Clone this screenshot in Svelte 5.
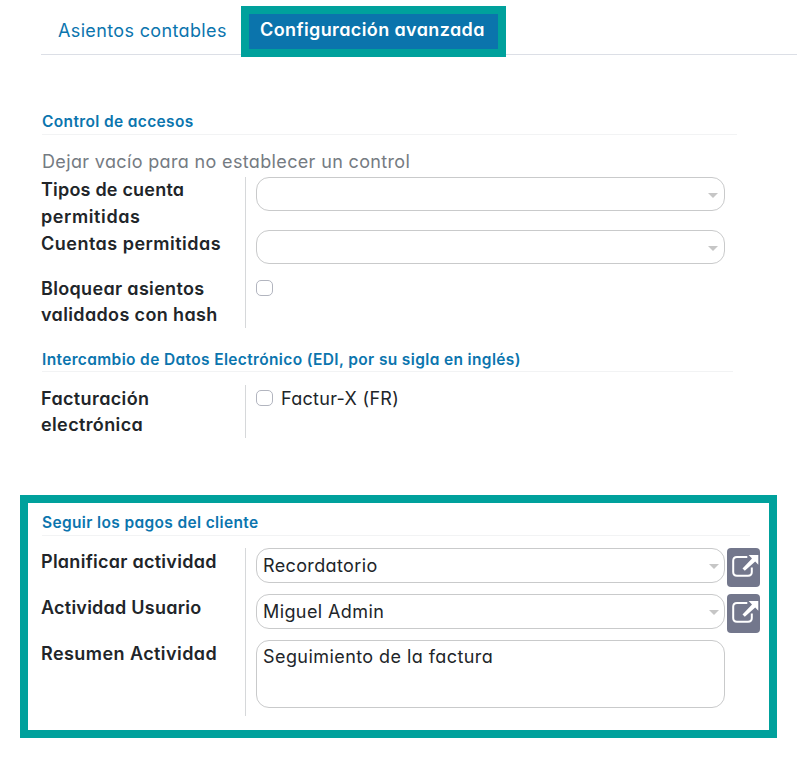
<script>
  const accessRows = [
    { kind: 'select', height: 53, loose: true, lines: [['Tipos de cuenta', 0.2], ['permitidas', 0.6]] },
    { kind: 'select', height: 45, lines: [['Cuentas permitidas', 0.49]] },
    { kind: 'check', height: 53, lines: [['Bloquear asientos', 0.33], ['validados con hash', 0.36]] }
  ];
  const ediRows = [
    {
      kind: 'check',
      height: 53,
      lines: [['Facturación', 0.38], ['electrónica', 0.38]],
      text: 'Factur-X (FR)',
      spacing: 0.3
    }
  ];
  const followRows = [
    { kind: 'link', height: 46, lines: [['Planificar actividad', 0.27]], text: 'Recordatorio', spacing: 0.37 },
    { kind: 'link', height: 46, lines: [['Actividad Usuario', 0.24]], text: 'Miguel Admin', spacing: 0.4 },
    { kind: 'area', height: 76, lines: [['Resumen Actividad', 0.43]], text: 'Seguimiento de la factura', spacing: 0.43 }
  ];
</script>

{#snippet group(rows)}
  <div class="group">
    {#each rows as row}
      <div class="row" style="height: {row.height}px">
        <div class="label" class:loose={row.loose}>
          {#each row.lines as [text, spacing]}
            <div style="letter-spacing: {spacing}px">{text}</div>
          {/each}
        </div>
        <div class="field">
          {#if row.kind === 'check'}
            <span class="box"></span>
            {#if row.text}
              <span class="option" style="letter-spacing: {row.spacing}px">{row.text}</span>
            {/if}
          {:else if row.kind === 'area'}
            <div class="area" style="letter-spacing: {row.spacing}px">{row.text}</div>
          {:else}
            <div class="select" class:tall={row.kind === 'link'}>
              <span style="letter-spacing: {row.spacing ?? 0}px">{row.text ?? ''}</span>
              <svg class="caret" width="10" height="5" viewBox="0 0 10 5"><path d="M0 0h10L5 5z" fill="#c6c6c6" /></svg>
            </div>
            {#if row.kind === 'link'}
              <button aria-label="Abrir">
                <svg width="33" height="39" viewBox="0 0 33 39">
                  <path d="M20.3 9H10Q6.2 9 6.2 12.8V24Q6.2 27.8 10 27.8H21Q24.8 27.8 24.8 24V19.5" fill="none" stroke="#fff" stroke-width="2" />
                  <path d="M21.6 7H31.3V16.7L28.2 13.6L17.8 22.8L15.5 20.5L25 10.4z" fill="#fff" />
                </svg>
              </button>
            {/if}
          {/if}
        </div>
      </div>
    {/each}
  </div>
{/snippet}

<main>
  <nav>
    <span class="tab">Asientos contables</span>
    <span class="tab active">Configuración avanzada</span>
  </nav>

  <section class="access">
    <h2>Control de accesos</h2>
    <p>Dejar vacío para no establecer un control</p>
    {@render group(accessRows)}
  </section>

  <section class="edi">
    <h2>Intercambio de Datos Electrónico (EDI, por su sigla en inglés)</h2>
    {@render group(ediRows)}
  </section>

  <section class="follow">
    <h2>Seguir los pagos del cliente</h2>
    {@render group(followRows)}
  </section>
</main>

<style>
  :global(body) {
    margin: 0;
    background: #fff;
  }
  main {
    box-sizing: border-box;
    height: 759px;
    padding-top: 6px;
    overflow: hidden;
    color: #212529;
    font: 18px/26.4px Inter, 'Open Sans', sans-serif;
    font-feature-settings: 'cv11' 1;
    white-space: nowrap;
  }
  nav {
    display: flex;
    box-sizing: border-box;
    height: 49px;
    margin-left: 41px;
    border-bottom: 1px solid #dcdfe6;
  }
  .tab {
    box-sizing: border-box;
    width: 200px;
    padding: 12px 0 0 17px;
    color: #0b75ae;
    letter-spacing: 0.36px;
  }
  .active {
    width: 265px;
    height: 51px;
    padding: 3px 0 0 11px;
    border: 8px solid #00a19c;
    background: #0b74ac;
    color: #fff;
    font-weight: 600;
    letter-spacing: 0.39px;
  }
  h2 {
    box-sizing: border-box;
    height: 27px;
    margin: 0 0 0 42px;
    border-bottom: 1px solid #f2f3f4;
    color: #0b75ae;
    font-size: 15.5px;
    font-weight: 600;
    line-height: 28px;
    letter-spacing: 0.36px;
  }
  p {
    height: 28px;
    margin: 14px 0 0 42px;
    color: #757b82;
    letter-spacing: 0.35px;
  }
  .access {
    width: 737px;
    padding-top: 53px;
  }
  .edi {
    width: 733px;
    padding-top: 17px;
  }
  .edi h2 {
    margin-bottom: 13px;
    line-height: 30px;
  }
  .follow {
    box-sizing: border-box;
    width: 757px;
    height: 243px;
    margin: 57px 0 0 20px;
    padding-top: 6px;
    border: 8px solid #00a19c;
  }
  .follow h2 {
    width: 708px;
    margin: 0 0 12px 14px;
  }
  .group {
    margin-left: 41px;
    background: linear-gradient(#d6d8da, #d6d8da) 204px 0 / 1px 100% no-repeat;
  }
  .follow .group {
    margin-left: 13px;
  }
  .row {
    display: flex;
  }
  .label {
    box-sizing: border-box;
    width: 215px;
    padding-top: 1px;
    font-weight: 600;
  }
  .loose {
    margin-top: -1px;
    padding-top: 0;
    line-height: 27px;
  }
  .field {
    display: flex;
    flex: none;
    align-items: flex-start;
  }
  .select {
    display: flex;
    box-sizing: border-box;
    align-items: center;
    justify-content: space-between;
    width: 469px;
    height: 34px;
    padding: 0 6px;
    border: 1px solid #c9cacb;
    border-radius: 13px;
  }
  .tall {
    height: 35px;
    padding: 1px 5px 0 6px;
  }
  .caret {
    display: block;
    margin-top: 3px;
  }
  .tall .caret {
    margin-top: 0;
  }
  .area {
    box-sizing: border-box;
    width: 469px;
    height: 68px;
    padding: 3px 6px;
    border: 1px solid #c9cacb;
    border-radius: 13px;
  }
  .box {
    box-sizing: border-box;
    width: 17px;
    height: 16px;
    margin-top: 5px;
    border: 1px solid #b2b5bf;
    border-radius: 5px;
  }
  .option {
    margin: 1px 0 0 8px;
  }
  button {
    display: block;
    width: 33px;
    height: 39px;
    margin: 0 0 0 2px;
    padding: 0;
    border: 0;
    border-radius: 4px;
    background: #73778c;
  }
  button svg {
    display: block;
  }
</style>
